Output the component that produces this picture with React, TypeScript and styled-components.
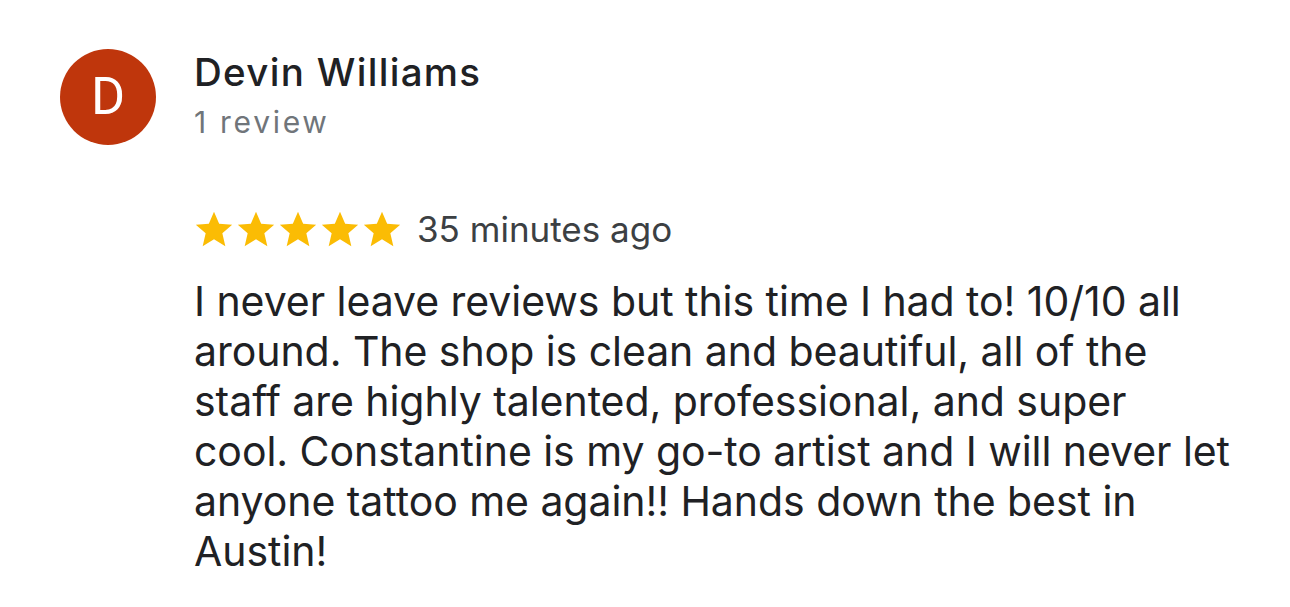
import React from "react";
import styled, { createGlobalStyle } from "styled-components";

const Global = createGlobalStyle`
  html, body { margin: 0; padding: 0; background: #ffffff; }
  body { font-family: Inter, "Noto Sans", Roboto, sans-serif; -webkit-font-smoothing: antialiased; }
`;

const Card = styled.div`
  width: 1290px;
  height: 607px;
  box-sizing: border-box;
  padding: 49px 40px 0 60px;
  background: #fff;
`;

const Header = styled.div`
  display: flex;
  align-items: flex-start;
  gap: 38px;
`;

const Avatar = styled.div`
  width: 96px;
  height: 96px;
  border-radius: 50%;
  background: #bf360c;
  color: #fff;
  display: flex;
  align-items: center;
  justify-content: center;
  font-family: Roboto, sans-serif;
  font-size: 52px;
  line-height: 1;
  flex-shrink: 0;
`;

const Meta = styled.div`
  display: flex;
  flex-direction: column;
  padding-top: 1px;
`;

const Name = styled.div`
  font-size: 38.5px;
  line-height: 44px;
  letter-spacing: 1.3px;
  color: #202124;
  font-weight: 500;
`;

const Count = styled.div`
  margin-top: 8px;
  font-size: 30px;
  line-height: 40px;
  letter-spacing: 2.7px;
  color: #70757a;
`;

const Body = styled.div`
  margin-left: 134px;
  margin-top: 64px;
`;

const RatingRow = styled.div`
  display: flex;
  align-items: center;
  gap: 15px;
  height: 40px;
`;

const Stars = styled.div`
  display: flex;
  gap: 2px;
`;

const Time = styled.span`
  font-size: 35px;
  line-height: 40px;
  color: #3c4043;
`;

const Text = styled.p`
  margin: 27px 0 0;
  font-size: 41px;
  line-height: 50px;
  letter-spacing: -0.05px;
  color: #202124;
  white-space: pre-line;
`;

const Star = () => (
  <svg width="40" height="40" viewBox="0 0 24 24">
    <path
      fill="#fbbc04"
      d="M12 1.6l3.1 7.2 7.8.7-5.9 5.1 1.8 7.7L12 18.2l-6.8 4.1 1.8-7.7-5.9-5.1 7.8-.7z"
    />
  </svg>
);

const review = `I never leave reviews but this time I had to! 10/10 all
around. The shop is clean and beautiful, all of the
staff are highly talented, professional, and super
cool. Constantine is my go-to artist and I will never let
anyone tattoo me again!! Hands down the best in
Austin!`;

export default function App() {
  return (
    <>
      <Global />
      <Card>
        <Header>
          <Avatar>D</Avatar>
          <Meta>
            <Name>Devin Williams</Name>
            <Count>1 review</Count>
          </Meta>
        </Header>
        <Body>
          <RatingRow>
            <Stars>
              <Star />
              <Star />
              <Star />
              <Star />
              <Star />
            </Stars>
            <Time>35 minutes ago</Time>
          </RatingRow>
          <Text>{review}</Text>
        </Body>
      </Card>
    </>
  );
}
